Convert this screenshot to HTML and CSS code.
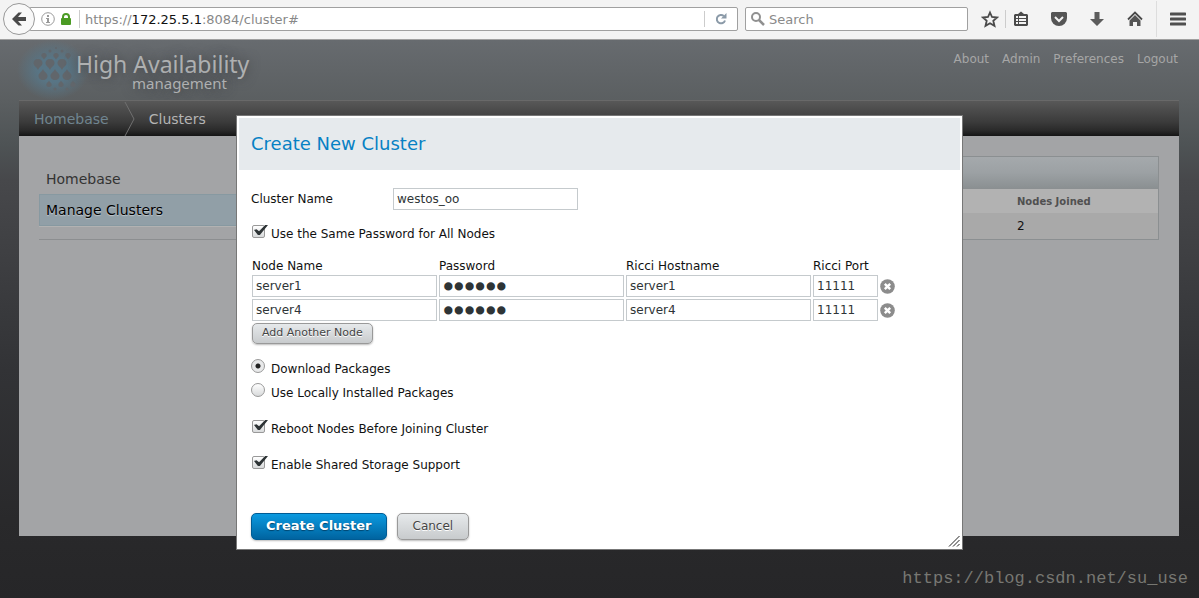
FILE: index.html
```html
<!DOCTYPE html>
<html lang="en">
<head>
<meta charset="utf-8">
<title>High Availability Management</title>
<link rel="stylesheet" href="styles.css">
</head>
<body>
<header class="browser">
  <button class="back" type="button" aria-label="Back">
    <svg width="16" height="16" viewBox="0 0 16 16"><path d="M1 8 7.500 1.500H11L7 6h8v4H7l4 4.500H7.500z" fill="#4a4a4a"/></svg>
  </button>
  <div class="urlbar">
    <svg width="14" height="14" viewBox="0 0 14 14"><circle cx="7" cy="7" r="6.300" fill="none" stroke="#999"/><path d="M6 3h2v2H6zM5 6h3v4h1v1H5v-1h1V7H5z" fill="#999"/></svg>
    <svg class="lock" width="10" height="12" viewBox="0 0 10 12"><path d="M2 6V4a3 3 0 0 1 6 0v2" fill="none" stroke="#4b9b24" stroke-width="2"/><rect y="5" width="10" height="7" rx="1" fill="#4b9b24"/></svg>
    <span class="url" role="textbox" contenteditable="true" spellcheck="false" aria-label="Address">https://<b>172.25.5.1</b>:8084/cluster#</span>
    <button class="reload" type="button" aria-label="Reload">
      <svg width="12" height="12" viewBox="0 0 12 12"><path d="M10 7.500A4.200 4.200 0 1 1 8.800 3" fill="none" stroke="#8b9aa8" stroke-width="2"/><path d="M11.500 0v5.500H6z" fill="#8b9aa8"/></svg>
    </button>
  </div>
  <label class="searchbar">
    <svg width="14" height="14" viewBox="0 0 14 14"><circle cx="5" cy="5" r="4" fill="none" stroke="#909090" stroke-width="2"/><path d="m8 8 5 5" stroke="#909090" stroke-width="2.500"/></svg>
    <input type="text" placeholder="Search" aria-label="Search">
  </label>
  <div class="tools">
    <button class="star" type="button" aria-label="Bookmark"><svg width="18" height="18" viewBox="0 0 18 18"><path d="m9 2.500 2 4.500 5 .5-3.700 3.300 1.200 5L9 13.200l-4.500 2.600 1.200-5L2 7.500 7 7z" fill="none" stroke="#4a4a4a" stroke-width="1.800"/></svg></button>
    <button class="ruled" type="button" aria-label="Library"><svg width="16" height="16" viewBox="0 0 16 16"><path d="M2 3h3l3-2.500L11 3h3l1 1v10l-1 1H2l-1-1V4z" fill="#4a4a4a"/><path d="M3 5h2v2H3zm3 0h7v2H6zM3 8h2v2H3zm3 0h7v2H6zm-3 3h2v2H3zm3 0h7v2H6z" fill="#f3f3f3"/></svg></button>
    <button type="button" aria-label="Pocket"><svg width="18" height="16" viewBox="0 0 18 16"><path d="M2 1h14l1 1v5a8 8 0 0 1-16 0V2z" fill="#555"/><path d="m5 6 4 4 4-4" fill="none" stroke="#f3f3f3" stroke-width="2"/></svg></button>
    <button type="button" aria-label="Downloads"><svg width="16" height="16" viewBox="0 0 16 16"><path d="M5.500 1h5v7H15l-7 7-7-7h4.500z" fill="#5c5c5c"/></svg></button>
    <button type="button" aria-label="Home"><svg width="16" height="16" viewBox="0 0 16 16"><path d="m1 8.500 7-7 7 7" fill="none" stroke="#4a4a4a" stroke-width="1.800"/><path d="m8 4 5.500 5.500V15H10v-4H6v4H2.500V9.500z" fill="#555"/></svg></button>
    <button class="menu" type="button" aria-label="Menu"><svg width="16" height="14" viewBox="0 0 16 14"><path d="M1 2h14M1 7h14M1 12h14" stroke="#4f4f4f" stroke-width="3" stroke-linecap="round"/></svg></button>
  </div>
</header>

<div class="page">
  <div class="masthead">
    <div class="brand">
      <svg class="drops" width="72" height="60" viewBox="-10 -6 72 60">
        <defs><path id="drop" d="M0-5C-3-5-4.500-3-4.500-1-4.500 2-1 3 0 6 1 3 4.500 2 4.500-1 4.500-3 3-5 0-5z"/></defs>
        <g fill="#61666b">
          <use href="#drop" transform="translate(11 18)"/><use href="#drop" transform="translate(23 18)"/><use href="#drop" transform="translate(35 18)"/>
          <use href="#drop" transform="translate(16 29) scale(1 -1)"/><use href="#drop" transform="translate(28 29) scale(1 -1)"/><use href="#drop" transform="translate(40 29) scale(1 -1)"/>
          <use href="#drop" transform="translate(17 10) scale(.6)"/><use href="#drop" transform="translate(29 10) scale(.6)"/><use href="#drop" transform="translate(41 10) scale(.6)"/>
          <use href="#drop" transform="translate(22 38) scale(.6 -.6)"/><use href="#drop" transform="translate(34 38) scale(.6 -.6)"/><use href="#drop" transform="translate(46 38) scale(.6 -.6)"/>
          <circle cx="23" cy="5" r="1.500"/><circle cx="29" cy="2" r="1"/><circle cx="35" cy="5" r="1.500"/><circle cx="28" cy="43" r="1.500"/><circle cx="40" cy="43" r="1.500"/>
        </g>
      </svg>
      <div class="brand-text">
        <span class="brand-name">High Availability</span>
        <span class="brand-sub">management</span>
      </div>
    </div>
    <nav class="account">
      <a href="#">About</a><a href="#">Admin</a><a href="#">Preferences</a><a href="#">Logout</a>
    </nav>
  </div>

  <nav class="crumbs">
    <a href="#">Homebase</a>
    <svg width="12" height="36" viewBox="0 0 12 36"><path d="m1 1 9 17-9 17" fill="none" stroke="#707070"/></svg>
    <span>Clusters</span>
  </nav>

  <main class="content">
    <nav class="sidebar">
      <a href="#">Homebase</a>
      <a class="current" href="#">Manage Clusters</a>
    </nav>
    <div class="listing">
      <div class="listing-bar"></div>
      <table class="clusters">
        <thead><tr><td></td><th scope="col">Nodes Joined</th></tr></thead>
        <tbody><tr><td></td><td>2</td></tr></tbody>
      </table>
    </div>
  </main>

  <form class="dialog" role="dialog" aria-labelledby="dialog-title">
    <h1 class="dialog-title" id="dialog-title">Create New Cluster</h1>
    <div class="dialog-body">
      <div class="field">
        <label for="cluster-name">Cluster Name</label>
        <input class="text" id="cluster-name" type="text" value="westos_oo">
      </div>
      <label class="option"><input class="check" type="checkbox" checked>Use the Same Password for All Nodes</label>
      <table class="nodes">
        <thead><tr><th scope="col">Node Name</th><th scope="col">Password</th><th scope="col">Ricci Hostname</th><th scope="col">Ricci Port</th></tr></thead>
        <tbody>
          <tr>
            <td><input class="text" type="text" value="server1" aria-label="Node name"></td>
            <td><input class="text secret" type="password" value="redhat" aria-label="Password"></td>
            <td><input class="text" type="text" value="server1" aria-label="Ricci hostname"></td>
            <td><input class="text port" type="text" value="11111" aria-label="Ricci port"></td>
            <td><button class="remove" type="button" aria-label="Remove node"><svg width="15" height="15" viewBox="0 0 15 15"><circle cx="7.500" cy="7.500" r="7.300" fill="#8c8c8c"/><path d="m4.800 4.800 5.400 5.400m0-5.400-5.400 5.400" stroke="#fff" stroke-width="2.400"/></svg></button></td>
          </tr>
          <tr>
            <td><input class="text" type="text" value="server4" aria-label="Node name"></td>
            <td><input class="text secret" type="password" value="redhat" aria-label="Password"></td>
            <td><input class="text" type="text" value="server4" aria-label="Ricci hostname"></td>
            <td><input class="text port" type="text" value="11111" aria-label="Ricci port"></td>
            <td><button class="remove" type="button" aria-label="Remove node"><svg width="15" height="15" viewBox="0 0 15 15"><circle cx="7.500" cy="7.500" r="7.300" fill="#8c8c8c"/><path d="m4.800 4.800 5.400 5.400m0-5.400-5.400 5.400" stroke="#fff" stroke-width="2.400"/></svg></button></td>
          </tr>
        </tbody>
      </table>
      <button class="btn small" type="button">Add Another Node</button>
      <div class="radios">
        <label class="option"><input class="radio" type="radio" name="packages" checked>Download Packages</label>
        <label class="option"><input class="radio" type="radio" name="packages">Use Locally Installed Packages</label>
      </div>
      <label class="option"><input class="check" type="checkbox" checked>Reboot Nodes Before Joining Cluster</label>
      <label class="option last"><input class="check" type="checkbox" checked>Enable Shared Storage Support</label>
      <div class="actions">
        <button class="btn primary" type="button">Create Cluster</button>
        <button class="btn" type="button">Cancel</button>
      </div>
    </div>
    <svg class="grip" width="12" height="12" viewBox="0 0 12 12"><path d="M1 11.500 11.500 1M5 11.500 11.500 5M9 11.500 11.500 9" stroke="#222" fill="none"/></svg>
  </form>

  <footer class="watermark">https://blog.csdn.net/su_use</footer>
</div>
</body>
</html>
```
FILE: styles.css
```css
* { box-sizing: border-box; }

body {
  margin: 0;
  min-height: 100vh;
  display: flex;
  flex-direction: column;
  font: 12px/16px "DejaVu Sans", sans-serif;
  color: #111;
}

a { text-decoration: none; color: inherit; }
button, input { font: inherit; color: inherit; margin: 0; }
button { padding: 0; border: 0; background: none; }
svg { display: block; flex: none; }

/* Browser toolbar */
.browser {
  display: flex;
  align-items: center;
  height: 40px;
  padding: 0 0 2px 3px;
  background: #f3f3f3;
  border-bottom: 1px solid #a0a0a0;
  font-size: 13px;
}
.back {
  display: grid;
  place-items: center;
  flex: none;
  width: 32px;
  height: 32px;
  border: 1px solid #999;
  border-radius: 50%;
  background: #f8f8f8;
  z-index: 1;
}
.urlbar, .searchbar {
  display: flex;
  align-items: center;
  height: 24px;
  background: #fff;
  border: 1px solid #a0a0a0;
  border-radius: 2px;
}
.urlbar {
  flex: 1;
  min-width: 0;
  gap: 6px;
  margin-left: -6px;
  padding-left: 11px;
}
.url {
  flex: 1;
  margin-left: 2px;
  padding: 2px 0 0 5px;
  border-left: 1px solid #ccc;
  color: #888;
  outline: 0;
}
.url b { font-weight: 400; color: #111; }
.reload {
  display: grid;
  place-items: center;
  width: 33px;
  height: 16px;
  border-left: 1px solid #ccc;
}
.searchbar {
  width: 223px;
  margin-left: 7px;
  padding: 0 5px;
  gap: 4px;
}
.searchbar input {
  flex: 1;
  min-width: 0;
  padding: 2px 0 0;
  border: 0;
  outline: 0;
  background: none;
}
.searchbar input::placeholder { color: #8a8a8a; opacity: 1; }
.tools { display: flex; align-items: center; margin-left: 9px; }
.tools button { display: grid; place-items: center; width: 38px; height: 18px; }
.tools .star { width: 28px; padding-right: 3px; }
.tools .ruled { width: 35px; border-left: 1px solid #ccc; padding-right: 4px; }
.tools .menu { width: 43px; height: 36px; margin-left: 2px; border-left: 1px solid #ddd; }

/* Page */
.page {
  position: relative;
  flex: 1;
  display: flex;
  flex-direction: column;
  padding: 0 20px 0 19px;
  background: linear-gradient(#676b6f 0, #5b5f61 60px, #4e5355 105px, #47484b 140px, #3e3f42 220px, #323336 330px, #29292b 480px, #262628 558px);
}
.masthead {
  display: flex;
  justify-content: space-between;
  height: 60px;
}
.brand {
  display: flex;
  color: #aeb0b1;
  font-family: "Noto Sans", sans-serif;
}
.drops {
  margin-left: -2px;
  background: radial-gradient(closest-side, #587585 40%, #58758500);
}
.brand-text {
  display: flex;
  flex-direction: column;
  margin: 12px 0 0 -13px;
  text-shadow: 0 0 12px #3c3e40;
}
.brand-name { font-size: 23px; line-height: 25px; }
.brand-sub { margin-left: 56px; font-size: 15px; line-height: 12px; }
.account {
  display: flex;
  gap: 13px;
  padding: 11px 1px 0 0;
  color: #a6a6a6;
}

.crumbs {
  display: flex;
  align-items: center;
  height: 36px;
  padding-left: 15px;
  gap: 15px;
  color: #b4b4b4;
  font-size: 14px;
  border-top: 1px solid #696969;
  background: linear-gradient(#585858, #3b3b3b 60%, #292929 85%, #151515);
}
.crumbs a { color: #708590; }
.crumbs span { margin-left: -2px; }

.content {
  flex: 1;
  display: flex;
  align-items: flex-start;
  padding: 20px;
  background: #a3a4a6;
}
.sidebar {
  display: flex;
  flex-direction: column;
  width: 240px;
  padding: 7px 0 13px;
  border-bottom: 1px solid #8c8e90;
  color: #333;
  font-size: 14px;
}
.sidebar a { padding: 8px 7px 6px; line-height: 17px; }
.sidebar .current {
  color: #000;
  background: #919fa7;
  border: 1px solid #8799a1;
  padding: 7px 6px 6px;
  text-shadow: 0 1px 1px #c0c8cc;
  box-shadow: 0 1px 0 #b2b2b2;
}
.listing { flex: 1; border: 1px solid #8b8f91; }
.listing-bar {
  height: 32px;
  background: linear-gradient(#a5a9ac, #9ca1a4 50%, #8b9092);
  border-bottom: 1px solid #8b8f91;
}
.clusters { width: 100%; border-collapse: collapse; table-layout: fixed; }
.clusters td, .clusters th { height: 24px; padding: 1px 0 0; text-align: left; }
.clusters th { width: 141px; font-size: 10px; color: #505050; }
.clusters thead { background: #b2b2b2; }
.clusters tbody { background: #a9a9a9; }
.clusters tbody td { height: 26px; padding: 0; }

/* Dialog */
.dialog {
  position: absolute;
  top: 75px;
  left: 0;
  right: 0;
  max-width: 727px;
  margin: 0 auto;
  padding: 2px;
  background: #fff;
  border: 1px solid #777;
}
.dialog-title {
  margin: 0;
  padding: 14px 12px;
  background: #e6eaed;
  color: #0681c4;
  font-size: 18px;
  font-weight: 400;
  line-height: 24px;
}
.dialog-body {
  display: flex;
  flex-direction: column;
  align-items: flex-start;
  padding: 18px 12px 7px;
}
.field { display: flex; align-items: center; margin-bottom: 12px; }
.field label { width: 142px; }
.text {
  display: block;
  width: 185px;
  height: 22px;
  padding: 0 3px;
  border: 1px solid #c5cacd;
  background: #fff;
  color: #2e3436;
}
.port { width: 65px; }
.secret { font-size: 18px; -webkit-text-stroke: 3px #2e3436; }
.option {
  display: flex;
  align-items: flex-start;
  gap: 6px;
  height: 24px;
  padding-top: 4px;
}
.check, .radio {
  appearance: none;
  flex: none;
  width: 14px;
  height: 14px;
  border: 1px solid #999;
  background: linear-gradient(#fff, #d8dadb);
}
.check {
  position: relative;
  width: 13px;
  height: 13px;
  margin: -1px 0 0 1px;
  border-radius: 2px;
}
.check:checked::after {
  content: "";
  position: absolute;
  left: 1px;
  top: -1px;
  width: 14px;
  height: 10px;
  background: #2e3436;
  clip-path: polygon(0 50%, 18% 42%, 36% 62%, 80% 0, 100% 0, 42% 100%, 28% 100%);
}
.radio {
  border-radius: 50%;
  margin-top: -2px;
}
.radio:checked { background: radial-gradient(circle, #222 0 2px, #e8e9ea 3px); }

.nodes { margin-top: 11px; border-collapse: collapse; }
.nodes th { padding: 0 0 0 1px; height: 18px; text-align: left; font-weight: 400; vertical-align: middle; }
.nodes td { padding: 0 1px 2px; }
.remove { display: block; }

.btn {
  height: 27px;
  padding: 0 15px 1px;
  border: 1px solid #999;
  border-radius: 5px;
  background: linear-gradient(#e6e9eb, #c8cbcd);
  box-shadow: 0 1px 2px #0004;
  color: #444;
  text-shadow: 0 1px 0 #fff;
}
.btn.small {
  height: 21px;
  margin-left: 1px;
  padding: 0 9px 1px;
  font-size: 11px;
}
.btn.primary {
  padding: 0 14px 1px;
  border-color: #005c95;
  background: linear-gradient(#0b9ae0, #0064a0);
  color: #fff;
  font-size: 13px;
  font-weight: 700;
  text-shadow: 0 1px 1px #00446e;
}
.radios { margin: 13px 0 12px; }
.radios + .option { margin-bottom: 12px; }
.last { margin-bottom: 36px; }
.actions { display: flex; gap: 10px; }
.grip { position: absolute; right: 2px; bottom: 2px; }

.watermark {
  height: 62px;
  padding-top: 33px;
  margin-right: -9px;
  text-align: right;
  color: #777772;
  font: 17px/20px "Liberation Mono", monospace;
}
```
